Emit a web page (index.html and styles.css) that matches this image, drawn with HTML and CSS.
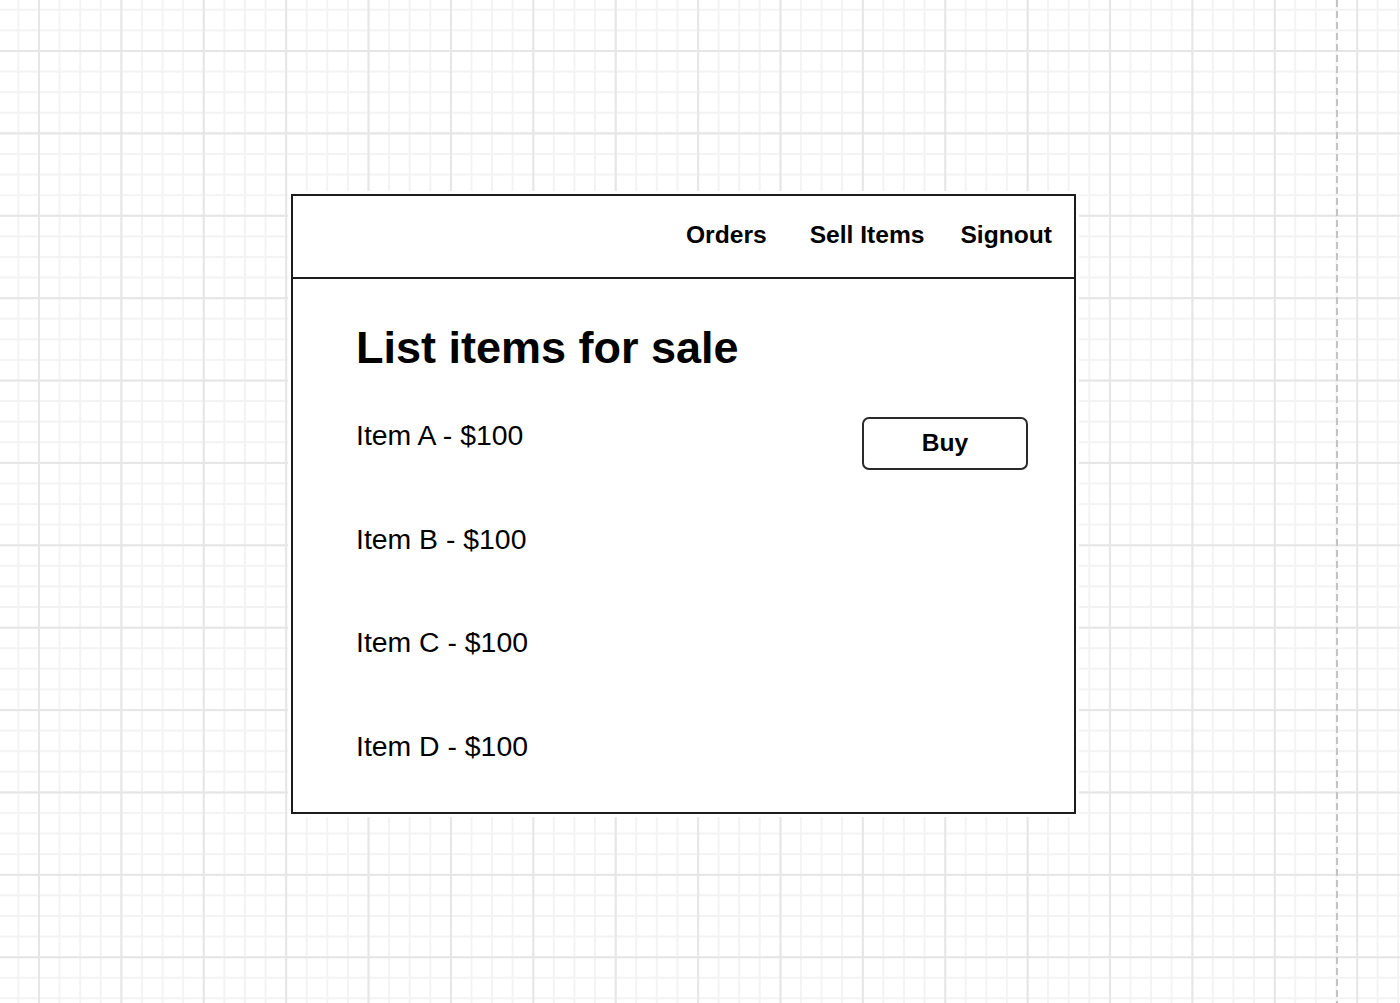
FILE: index.html
```html
<!DOCTYPE html>
<html lang="en">
<head>
<meta charset="utf-8">
<title>List items for sale</title>
<link rel="stylesheet" href="styles.css">
</head>
<body>
<div class="canvas">
  <div class="guide"></div>
  <div class="frame">
    <header class="topbar">
      <nav class="nav">
        <span class="nav-link nav-orders">Orders</span>
        <span class="nav-link">Sell Items</span>
        <span class="nav-link">Signout</span>
      </nav>
    </header>
    <main class="content">
      <h1 class="title">List items for sale</h1>
      <ul class="items">
        <li class="item"><span class="item-label">Item A - $100</span><button class="buy">Buy</button></li>
        <li class="item"><span class="item-label">Item B - $100</span></li>
        <li class="item"><span class="item-label">Item C - $100</span></li>
        <li class="item"><span class="item-label">Item D - $100</span></li>
      </ul>
    </main>
  </div>
</div>
</body>
</html>
```

FILE: styles.css
```css
html, body {
  margin: 0;
  padding: 0;
}

body {
  width: 1400px;
  height: 1003px;
  overflow: hidden;
  font-family: "Liberation Sans", Arial, Helvetica, sans-serif;
  color: #000;
  background-color: #fff;
  background-image:
    linear-gradient(to right, #e6e6e6 2px, transparent 2px),
    linear-gradient(to bottom, #e6e6e6 2px, transparent 2px),
    linear-gradient(to right, #f3f3f3 2px, transparent 2px),
    linear-gradient(to bottom, #f3f3f3 2px, transparent 2px);
  background-size: 82.4px 82.4px, 82.4px 82.4px, 20.6px 20.6px, 20.6px 20.6px;
  background-position: 38px 50px, 38px 50px, 38px 50px, 38px 50px;
}

.canvas {
  position: relative;
  width: 1400px;
  height: 1003px;
  padding: 194px 0 0 291px;
  box-sizing: border-box;
}

.guide {
  position: absolute;
  left: 1336px;
  top: 0;
  width: 2px;
  height: 1003px;
  background-image: repeating-linear-gradient(to bottom, #c4c4c4 0 7px, transparent 7px 11px);
}

.frame {
  width: 785px;
  height: 620px;
  box-sizing: border-box;
  border: 2px solid #1c1c1c;
  background: #fff;
  box-shadow: 0 0 0 3px #fff;
  display: flex;
  flex-direction: column;
  overflow: hidden;
}

.topbar {
  flex: 0 0 83px;
  height: 83px;
  box-sizing: border-box;
  border-bottom: 2px solid #1c1c1c;
  display: flex;
  align-items: center;
  justify-content: flex-end;
  padding: 0 22px 3px 0;
}

.nav {
  display: flex;
  align-items: center;
  gap: 36px;
}

.nav-link {
  font-size: 24.6px;
  font-weight: bold;
  line-height: 1;
}

.nav-orders {
  margin-right: 7px;
}

.content {
  flex: 1 1 auto;
  min-height: 0;
  padding: 46px 46px 0 63px;
}

.title {
  margin: 0;
  font-size: 45px;
  line-height: 45px;
  font-weight: bold;
}

.items {
  list-style: none;
  margin: 47px 0 0;
  padding: 0;
  display: grid;
  grid-auto-rows: 103.5px;
}

.item {
  display: flex;
  justify-content: space-between;
  align-items: flex-start;
}

.item-label {
  margin-top: 4px;
  font-size: 28.4px;
  line-height: 28px;
}

.buy {
  width: 166px;
  height: 53px;
  box-sizing: border-box;
  border: 2px solid #2a2a2a;
  border-radius: 7px;
  background: #fff;
  color: #000;
  font-family: "Liberation Sans", Arial, Helvetica, sans-serif;
  font-size: 24.6px;
  font-weight: bold;
  padding: 0;
  line-height: 1;
}
```
